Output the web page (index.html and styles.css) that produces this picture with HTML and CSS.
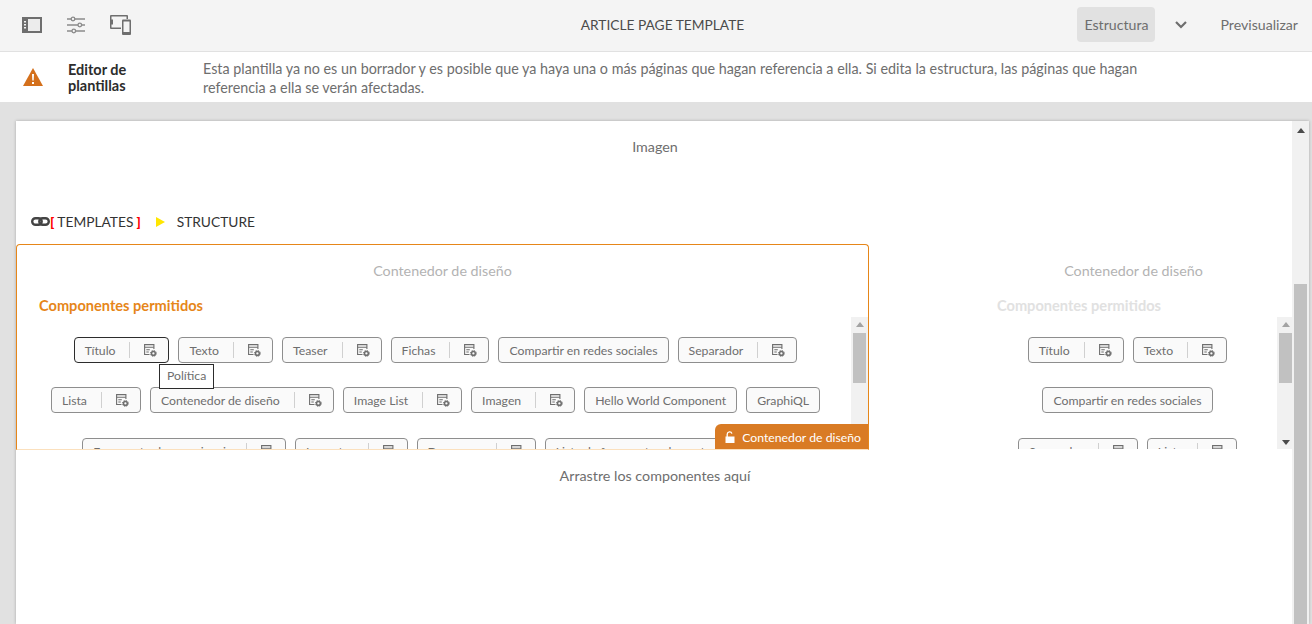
FILE: index.html
```html
<!DOCTYPE html>
<html lang="es">
<head>
  <meta charset="UTF-8">
  <meta name="viewport" content="width=device-width, initial-scale=1.0">
  <title>Article Page Template</title>
  <link rel="stylesheet" href="styles.css">
</head>
<body>
  <header class="toolbar">
    <div class="toolbar-icons">
      <svg class="tool-icon" viewBox="0 0 20 16" width="20" height="16"><path fill="#6e6e6e" d="M0 0h20v16H0z"/><path fill="#ececec" d="M6 2h12v12H6z"/><path fill="#f4f4f4" d="M2 4h2v1.500H2zM2 7h2v1.500H2zM2 10h2v1.500H2z"/></svg>
      <svg class="tool-icon" viewBox="0 0 18 18" width="18" height="18"><g fill="none" stroke="#8a8a8a" stroke-width="1.300"><path d="M0 3h4.500M8 3h10M0 9h11M14.500 9H18M0 15h5M8.500 15H18"/><circle cx="6" cy="3" r="1.800"/><circle cx="12.800" cy="9" r="1.800"/><circle cx="6.800" cy="15" r="1.800"/></g></svg>
      <svg class="tool-icon" viewBox="0 0 21 20" width="21" height="20"><path fill="#6e6e6e" d="M1 0h16a1 1 0 0 1 1 1v3h-1.500V1.500h-15v3H3v5H1.500v3H11V14H1a1 1 0 0 1-1-1V1a1 1 0 0 1 1-1z"/><path fill="#6e6e6e" d="M13 4.500h7a1 1 0 0 1 1 1V19a1 1 0 0 1-1 1h-7a1 1 0 0 1-1-1V5.500a1 1 0 0 1 1-1z"/><path fill="#f4f4f4" d="M13.500 6.500h6v10.500h-6z"/></svg>
    </div>
    <div class="toolbar-title">ARTICLE PAGE TEMPLATE</div>
    <div class="toolbar-actions">
      <span class="mode-btn">Estructura</span>
      <svg class="chevron" viewBox="0 0 12 8" width="12" height="8"><path fill="none" stroke="#6e6e6e" stroke-width="2.200" d="M1 1l5 5 5-5"/></svg>
      <span class="preview-btn">Previsualizar</span>
    </div>
  </header>

  <section class="notice">
    <svg class="notice-icon" viewBox="0 0 20 18" width="20" height="18"><path fill="#d4701c" d="M10 0l10 18H0z"/><path fill="#fff" d="M9 6h2l-.3 6.500H9.300zM9 14h2v2H9z"/></svg>
    <div class="notice-title">Editor de plantillas</div>
    <p class="notice-text">Esta plantilla ya no es un borrador y es posible que ya haya una o más páginas que hagan referencia a ella. Si edita la estructura, las páginas que hagan referencia a ella se verán afectadas.</p>
  </section>

  <main class="stage">
    <div class="frame">
      <div class="page">
        <div class="placeholder image-slot">Imagen</div>
        <div class="breadcrumb">
          <svg class="link-icon" viewBox="0 0 19 9" width="19" height="9"><rect x="1.200" y="1.200" width="9.500" height="6.600" rx="3.300" fill="none" stroke="#444" stroke-width="2.400"/><rect x="8.300" y="1.200" width="9.500" height="6.600" rx="3.300" fill="none" stroke="#444" stroke-width="2.400"/></svg>
          <span class="bracket">[</span><span class="crumb">TEMPLATES</span><span class="bracket close">]</span>
          <span class="crumb-arrow"></span>
          <span class="crumb">STRUCTURE</span>
        </div>

        <div class="layout-row">
          <div class="container-box selected">
            <div class="placeholder">Contenedor de diseño</div>
            <h2 class="allowed-title">Componentes permitidos</h2>
            <div class="chip-scroll">
              <div class="chip-list">
                <div class="chip-row">
                  <span class="chip focused">Título<i class="chip-sep"></i><svg class="policy"><use href="#policy-icon"/></svg></span>
                  <span class="chip">Texto<i class="chip-sep"></i><svg class="policy"><use href="#policy-icon"/></svg></span>
                  <span class="chip">Teaser<i class="chip-sep"></i><svg class="policy"><use href="#policy-icon"/></svg></span>
                  <span class="chip">Fichas<i class="chip-sep"></i><svg class="policy"><use href="#policy-icon"/></svg></span>
                  <span class="chip">Compartir en redes sociales</span>
                  <span class="chip">Separador<i class="chip-sep"></i><svg class="policy"><use href="#policy-icon"/></svg></span>
                </div>
                <div class="chip-row">
                  <span class="chip">Lista<i class="chip-sep"></i><svg class="policy"><use href="#policy-icon"/></svg></span>
                  <span class="chip">Contenedor de diseño<i class="chip-sep"></i><svg class="policy"><use href="#policy-icon"/></svg></span>
                  <span class="chip">Image List<i class="chip-sep"></i><svg class="policy"><use href="#policy-icon"/></svg></span>
                  <span class="chip">Imagen<i class="chip-sep"></i><svg class="policy"><use href="#policy-icon"/></svg></span>
                  <span class="chip">Hello World Component</span>
                  <span class="chip">GraphiQL</span>
                </div>
                <div class="chip-row">
                  <span class="chip">Fragmento de experiencia<i class="chip-sep"></i><svg class="policy"><use href="#policy-icon"/></svg></span>
                  <span class="chip">Incrustar<i class="chip-sep"></i><svg class="policy"><use href="#policy-icon"/></svg></span>
                  <span class="chip">Descargar<i class="chip-sep"></i><svg class="policy"><use href="#policy-icon"/></svg></span>
                  <span class="chip">Lista de fragmentos de contenido<i class="chip-sep"></i><svg class="policy"><use href="#policy-icon"/></svg></span>
                </div>
              </div>
              <div class="mini-scrollbar">
                <span class="arrow up"></span>
                <span class="mini-thumb"></span>
                <span class="arrow down"></span>
              </div>
            </div>
            <div class="tooltip">Política</div>
            <div class="container-tag">
              <svg viewBox="0 0 10 12" width="10" height="12"><path fill="none" stroke="#fff" stroke-width="1.300" d="M2.200 6V3.200a2.400 2.400 0 0 1 4.700-.6"/><path fill="#fff" d="M.5 5.500h9V12h-9z"/></svg>
              Contenedor de diseño
            </div>
          </div>

          <div class="container-box side">
            <div class="placeholder">Contenedor de diseño</div>
            <h2 class="allowed-title">Componentes permitidos</h2>
            <div class="chip-scroll">
              <div class="chip-list">
                <div class="chip-row">
                  <span class="chip">Título<i class="chip-sep"></i><svg class="policy"><use href="#policy-icon"/></svg></span>
                  <span class="chip">Texto<i class="chip-sep"></i><svg class="policy"><use href="#policy-icon"/></svg></span>
                </div>
                <div class="chip-row">
                  <span class="chip">Compartir en redes sociales</span>
                </div>
                <div class="chip-row">
                  <span class="chip">Separador<i class="chip-sep"></i><svg class="policy"><use href="#policy-icon"/></svg></span>
                  <span class="chip">Lista<i class="chip-sep"></i><svg class="policy"><use href="#policy-icon"/></svg></span>
                </div>
              </div>
              <div class="mini-scrollbar">
                <span class="arrow up"></span>
                <span class="mini-thumb"></span>
                <span class="arrow down"></span>
              </div>
            </div>
          </div>
        </div>

        <div class="placeholder drop-hint">Arrastre los componentes aquí</div>
      </div>
      <div class="page-scrollbar">
        <span class="arrow up dark"></span>
        <span class="page-thumb"></span>
      </div>
    </div>
  </main>

  <svg class="icon-defs" width="0" height="0">
    <symbol id="policy-icon" viewBox="0 0 13 13">
      <path fill="none" stroke="#6e6e6e" stroke-width="1.100" d="M5.500 10.500H.6V.6h9.300V5"/>
      <path fill="none" stroke="#6e6e6e" stroke-width="1.100" d="M.6 3.300h9.300M2.300 5.800h3.500M2.300 8h2.500"/>
      <circle cx="9.400" cy="9.400" r="1.900" fill="none" stroke="#6e6e6e" stroke-width="1.500"/>
      <circle cx="9.400" cy="9.400" r="3" fill="none" stroke="#6e6e6e" stroke-width="1" stroke-dasharray="1.200 1.150"/>
    </symbol>
  </svg>
</body>
</html>
```

FILE: styles.css
```css
* {
  box-sizing: border-box;
}
html, body {
  height: 100%;
}
body {
  margin: 0;
  display: flex;
  flex-direction: column;
  overflow: hidden;
  font-family: Lato, "Open Sans", Arial, sans-serif;
  font-size: 14.3px;
  color: #6e6e6e;
  background-color: #fff;
}
.toolbar {
  flex: 0 0 52px;
  display: grid;
  grid-template-columns: 1fr auto 1fr;
  align-items: center;
  padding: 0 14px 2px 22px;
  background-color: #f4f4f4;
  border-bottom: 1px solid #e1e1e1;
}
.toolbar-icons {
  display: flex;
  align-items: center;
  gap: 25px;
}
.toolbar-title {
  margin-left: 5px;
  font-size: 13.75px;
  color: #4b4b4b;
}
.toolbar-actions {
  display: flex;
  align-items: center;
  justify-content: flex-end;
  font-size: 14.15px;
}
.mode-btn {
  padding: 9px 7px;
  border-radius: 4px;
  background-color: #e1e1e1;
}
.chevron {
  margin: 0 33px 0 20px;
}
.notice {
  flex: 0 0 50px;
  display: flex;
  align-items: center;
  padding-left: 23px;
}
.notice-icon {
  flex: none;
  margin-right: 25px;
}
.notice-title {
  flex: none;
  width: 70px;
  margin-right: 65px;
  padding-top: 2px;
  font-size: 14.5px;
  line-height: 16px;
  font-weight: 700;
  color: #2c2c2c;
}
.notice-text {
  margin: 0;
  padding-top: 1px;
  width: 960px;
  font-size: 14.33px;
  line-height: 19px;
}
.stage {
  flex: 1;
  min-height: 0;
  padding: 19px 3px 0 16px;
  background-color: #e1e1e1;
}
.frame {
  display: flex;
  height: 100%;
  background-color: #fff;
  box-shadow: 0 0 3px rgba(0, 0, 0, 0.25);
}
.page {
  flex: 1;
  min-width: 0;
}
.page-scrollbar {
  flex: 0 0 17px;
  display: flex;
  flex-direction: column;
  align-items: center;
  padding-top: 7px;
  background-color: #f1f1f1;
}
.page-thumb {
  width: 13px;
  margin-top: 151px;
  flex: 1;
  background-color: #c1c1c1;
}
.placeholder {
  text-align: center;
  color: #6e6e6e;
}
.image-slot {
  padding: 17px 0 0 2px;
  height: 80px;
}
.breadcrumb {
  display: flex;
  align-items: center;
  height: 43px;
  padding: 0 0 2px 15px;
  font-size: 13.75px;
  color: #333;
}
.bracket {
  color: #f00;
  font-weight: 900;
  margin: 0 3px 0 0;
}
.bracket.close {
  margin: 0 0 0 3px;
}
.crumb-arrow {
  margin: 0 12px 0 15px;
  border-left: 9px solid #ffe600;
  border-top: 5px solid transparent;
  border-bottom: 5px solid transparent;
}
.layout-row {
  display: grid;
  grid-template-columns: 853px 105px 1fr;
  height: 206px;
}
.container-box {
  position: relative;
  display: flex;
  flex-direction: column;
  overflow: hidden;
  border: 1px solid transparent;
}
.container-box .placeholder {
  padding-top: 17px;
  height: 43px;
  color: #b3b3b3;
}
.container-box.selected {
  border-color: #e68619;
  border-bottom-color: #fbe0bd;
  border-radius: 4px 4px 0 0;
}
.container-box.side {
  grid-column: 3;
  border-width: 1px 0 1px 1px;
}
.allowed-title {
  margin: 0;
  height: 29px;
  padding: 10px 0 0 22px;
  font-size: 14.6px;
  line-height: 16px;
  font-weight: 700;
  color: #e68619;
}
.side .allowed-title {
  color: #e1e1e1;
}
.chip-scroll {
  flex: 1;
  min-height: 0;
  display: flex;
}
.chip-list {
  flex: 1;
  min-width: 0;
  padding: 20px 0 0 3px;
}
.chip-row {
  display: flex;
  justify-content: center;
  gap: 9px;
  height: 26px;
  margin-bottom: 24px;
}
.chip-row:nth-child(2) {
  margin-bottom: 25px;
}
.chip {
  flex: none;
  display: inline-flex;
  align-items: center;
  height: 26px;
  padding: 0 10px;
  background-color: #fafafa;
  border: 1px solid #8e8e8e;
  border-radius: 4px;
  font-size: 12.25px;
  white-space: nowrap;
}
.chip.focused {
  border-color: #2c2c2c;
}
.chip-sep {
  width: 1px;
  height: 16px;
  margin: 0 14px;
  background-color: #d0d0d0;
}
.policy {
  width: 13px;
  height: 13px;
  margin-right: 1px;
}
.mini-scrollbar {
  flex: 0 0 17px;
  display: flex;
  flex-direction: column;
  align-items: flex-start;
  padding: 5px 0 4px 2px;
  background-color: #f1f1f1;
}
.side .mini-scrollbar {
  flex-basis: 15px;
}
.mini-scrollbar .arrow {
  margin-left: 2.5px;
}
.mini-thumb {
  width: 13px;
  height: 50px;
  margin-top: 6px;
  background-color: #c1c1c1;
}
.arrow {
  flex: none;
  width: 0;
  height: 0;
  border-left: 4px solid transparent;
  border-right: 4px solid transparent;
}
.arrow.up {
  border-bottom: 5px solid #a3a3a3;
}
.arrow.down {
  margin-top: auto;
  border-top: 5px solid #4b4b4b;
}
.arrow.up.dark {
  border-bottom-color: #4b4b4b;
}
.tooltip {
  position: absolute;
  left: 142px;
  top: 119px;
  padding: 3px 7px;
  height: 25px;
  font-size: 12.25px;
  background-color: #fff;
  border: 1px solid #2c2c2c;
}
.container-tag {
  position: absolute;
  right: -1px;
  bottom: -1px;
  display: flex;
  align-items: center;
  gap: 7px;
  height: 26px;
  padding: 0 8px 0 10px;
  font-size: 12.25px;
  color: #fff;
  background-color: #d97b24;
  border-radius: 6px 0 0 0;
}
.drop-hint {
  padding: 17px 0 0 2px;
}
.icon-defs {
  position: absolute;
}
```
